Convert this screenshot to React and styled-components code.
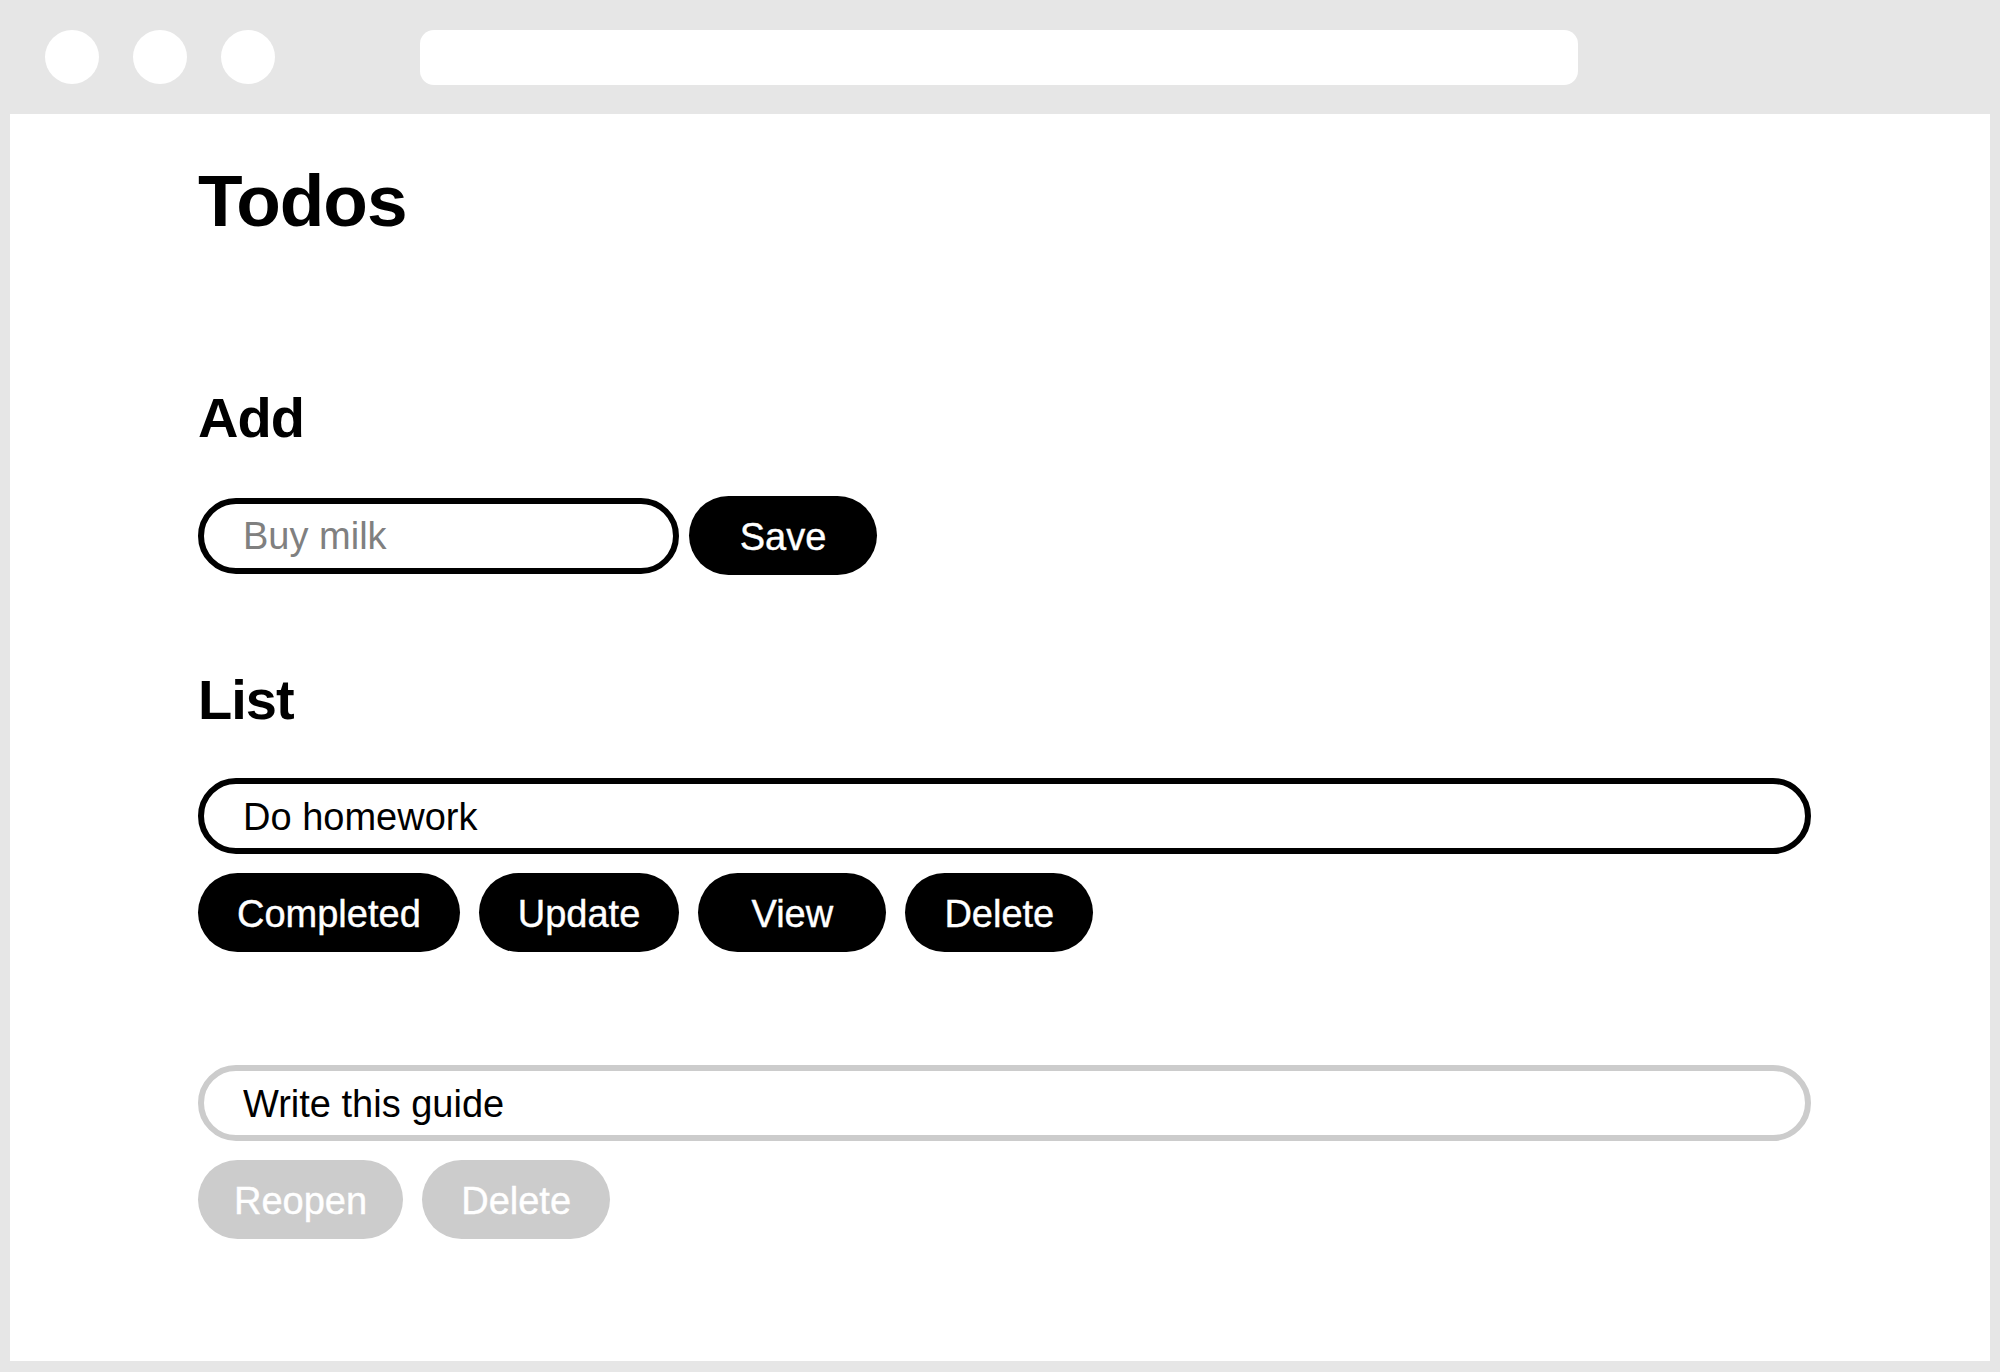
import styled, { createGlobalStyle } from "styled-components";

const GlobalStyle = createGlobalStyle`
  html, body {
    margin: 0;
    padding: 0;
    background: #e6e6e6;
  }
  body {
    font-family: "Liberation Sans", Arial, sans-serif;
    color: #000;
  }
`;

const todos = [
    {id: 1, title: "Do homework", done: false},
    {id: 2, title: "Write this guide", done: true},
];

export default function App(){
    return(
        <>
            <GlobalStyle/>
            <Window>
                <TitleBar>
                    <Dots>
                        <Dot/>
                        <Dot/>
                        <Dot/>
                    </Dots>
                    <UrlBar/>
                </TitleBar>
                <Page>
                    <Title>Todos</Title>

                    <SectionTitle>Add</SectionTitle>
                    <AddRow>
                        <AddInput placeholder="Buy milk"/>
                        <Button>Save</Button>
                    </AddRow>

                    <SectionTitle>List</SectionTitle>
                    <List>
                        {todos.map(todo => (
                            <Item key={todo.id}>
                                <TodoInput $done={todo.done} defaultValue={todo.title}/>
                                <Actions>
                                    {todo.done ? (
                                        <>
                                            <Button $muted>Reopen</Button>
                                            <Button $muted>Delete</Button>
                                        </>
                                    ) : (
                                        <>
                                            <Button>Completed</Button>
                                            <Button>Update</Button>
                                            <Button>View</Button>
                                            <Button>Delete</Button>
                                        </>
                                    )}
                                </Actions>
                            </Item>
                        ))}
                    </List>
                </Page>
            </Window>
        </>
    )
}

const Window = styled.div`
  display: flex;
  flex-direction: column;
  height: 100vh;
  min-height: 1372px;
  box-sizing: border-box;
  padding: 0 10px 11px;
  background: #e6e6e6;
`;

const TitleBar = styled.div`
  display: flex;
  align-items: center;
  height: 114px;
  flex-shrink: 0;
  padding-left: 35px;
`;

const Dots = styled.div`
  display: flex;
  gap: 34px;
`;

const Dot = styled.span`
  width: 54px;
  height: 54px;
  border-radius: 50%;
  background: #fff;
`;

const UrlBar = styled.div`
  width: 1158px;
  height: 55px;
  margin-left: 145px;
  border-radius: 14px;
  background: #fff;
`;

const Page = styled.main`
  flex: 1;
  display: flex;
  flex-direction: column;
  align-items: flex-start;
  padding: 50px 179px 0 188px;
  background: #fff;
`;

const Title = styled.h1`
  margin: 0 0 153px;
  font-size: 73px;
  line-height: 1;
  font-weight: 700;
  letter-spacing: -1px;
`;

const SectionTitle = styled.h2`
  margin: 0 0 50px;
  font-size: 56px;
  line-height: 1;
  font-weight: 700;
  letter-spacing: -1px;
`;

const Field = styled.input`
  box-sizing: border-box;
  height: 76px;
  padding: 2px 39px 0;
  border: 6px solid #000;
  border-radius: 999px;
  background: #fff;
  font-family: inherit;
  font-size: 38px;
  color: #000;
  outline: none;

  &::placeholder {
    color: #808080;
  }
`;

const AddRow = styled.div`
  display: flex;
  align-items: center;
  gap: 10px;
  margin-bottom: 97px;
`;

const AddInput = styled(Field)`
  width: 481px;
`;

const TodoInput = styled(Field)`
  width: 100%;
  border-color: ${p => p.$done ? "#cccccc" : "#000"};
`;

const List = styled.div`
  display: flex;
  flex-direction: column;
  gap: 113px;
  align-self: stretch;
`;

const Item = styled.div`
  display: flex;
  flex-direction: column;
  gap: 19px;
`;

const Actions = styled.div`
  display: flex;
  gap: 19px;
`;

const Button = styled.button`
  box-sizing: border-box;
  min-width: 188px;
  height: 79px;
  padding: 3px ${p => p.$muted ? "36px" : "39px"} 0;
  border: none;
  border-radius: 999px;
  background: ${p => p.$muted ? "#cccccc" : "#000"};
  color: #fff;
  font-family: inherit;
  font-size: 38px;
  -webkit-text-stroke: 0.4px #fff;
  cursor: pointer;
`;
